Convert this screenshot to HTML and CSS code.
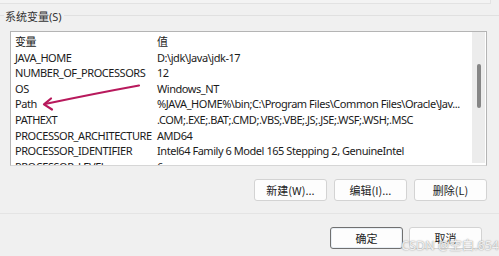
FILE: index.html
```html
<!DOCTYPE html>
<html>
    <head>
        <title>系统变量</title>
        <link rel="stylesheet" href="styles.css">
    </head>
    <body>
        <div class="top-edge"></div>
        <div class="group-title"><span>系统变量(S)</span></div>

        <div class="list-box">
            <div class="list">
                <div class="row head"><span class="name">变量</span><span>值</span></div>
                <div class="row"><span class="name">JAVA_HOME</span><span>D:\jdk\Java\jdk-17</span></div>
                <div class="row"><span class="name">NUMBER_OF_PROCESSORS</span><span>12</span></div>
                <div class="row"><span class="name">OS</span><span>Windows_NT</span></div>
                <div class="row"><span class="name">Path</span><span>%JAVA_HOME%\bin;C:\Program Files\Common Files\Oracle\Jav...</span></div>
                <div class="row"><span class="name">PATHEXT</span><span>.COM;.EXE;.BAT;.CMD;.VBS;.VBE;.JS;.JSE;.WSF;.WSH;.MSC</span></div>
                <div class="row"><span class="name">PROCESSOR_ARCHITECTURE</span><span>AMD64</span></div>
                <div class="row"><span class="name">PROCESSOR_IDENTIFIER</span><span>Intel64 Family 6 Model 165 Stepping 2, GenuineIntel</span></div>
                <div class="row"><span class="name">PROCESSOR_LEVEL</span><span>6</span></div>
            </div>
            <div class="scrollbar"><div class="thumb"></div></div>
        </div>

        <div class="actions">
            <button class="btn">新建(W)...</button>
            <button class="btn">编辑(I)...</button>
            <button class="btn">删除(L)</button>
        </div>

        <div class="footer">
            <button class="btn default">确定</button>
            <button class="btn">取消</button>
        </div>

        <!-- annotation arrow pointing at Path -->
        <svg class="arrow" width="499" height="256" viewBox="0 0 499 256">
            <path d="M139 85.5 Q 95 93.5 45 104" fill="none" stroke="#b8195c" stroke-width="2.2" stroke-linecap="round"/>
            <path d="M51 98.5 L44 104.3 L52 109.5" fill="none" stroke="#b8195c" stroke-width="2.2" stroke-linecap="round" stroke-linejoin="round"/>
        </svg>

        <div class="watermark">CSDN @空白.654</div>
    </body>
</html>
```

FILE: styles.css
```css
* {
    margin: 0;
    padding: 0;
    box-sizing: border-box;
}

body {
    width: 499px;
    height: 256px;
    overflow: hidden;
    position: relative;
    background: #f0f0f0;
    color: #1b1b1b;
    font-family: 'Noto Sans', 'Noto Sans CJK SC', sans-serif;
    font-size: 11px;
}

.top-edge {
    width: 491px;
    height: 4px;
    border-bottom: 1px solid #e2e2e2;
    border-right: 1px solid #e2e2e2;
    background: #f3f3f3;
}

.group-title {
    height: 24px;
    display: flex;
    align-items: center;
    padding-bottom: 1px;
    font-size: 11px;
    color: #333;
}
.group-title::before {
    content: '';
    width: 4px;
    height: 1px;
    background: #e0e0e0;
}
.group-title span {
    padding: 0 2px 0 1px;
}
.group-title::after {
    content: '';
    flex: 1;
    height: 1px;
    background: #e0e0e0;
}

.list-box {
    margin: 3px 0 0 10px;
    width: 477px;
    height: 135px;
    display: flex;
    background: #fff;
    border: 1px solid #b4b4b4;
    border-bottom-color: #d6d6d6;
    overflow: hidden;
}
.list {
    flex: 1;
    min-width: 0;
    padding: 2px 0 0 4px;
    letter-spacing: -0.45px;
}
.row {
    height: 15.6px;
    line-height: 15.6px;
    display: flex;
    white-space: nowrap;
}
.row .name {
    flex: none;
    width: 142px;
}
.scrollbar {
    flex: none;
    width: 13px;
    margin: 0 1px 2px 0;
    background: #ececec;
}
.thumb {
    width: 4px;
    height: 44px;
    margin: 32px 0 0 5px;
    background: #868686;
    border-radius: 2px;
}

.actions {
    display: flex;
    justify-content: flex-end;
    gap: 7px;
    padding: 13px 12px 12px 0;
    border-bottom: 1px solid #e4e4e4;
}
.btn {
    width: 73px;
    height: 22px;
    background: #fdfdfd;
    border: 1px solid #d3d3d3;
    border-radius: 3px;
    font-family: 'Noto Sans CJK SC', 'Noto Sans', sans-serif;
    font-size: 11px;
    color: #222;
}
.footer {
    display: flex;
    justify-content: flex-end;
    gap: 6px;
    padding: 13px 17px 0 0;
}
.btn.default {
    border-color: #707070;
    box-shadow: inset 0 0 0 1px #e8eef4;
}

.arrow {
    position: absolute;
    top: 0;
    left: 0;
    pointer-events: none;
}

.watermark {
    position: absolute;
    right: 0;
    bottom: 2px;
    font-family: 'Noto Sans', 'Noto Sans CJK SC', sans-serif;
    font-size: 12.5px;
    color: rgba(255, 255, 255, 0.85);
    text-shadow: 0 0 1px #9a9a9a, 0 0 2px #b0b0b0;
}
```
